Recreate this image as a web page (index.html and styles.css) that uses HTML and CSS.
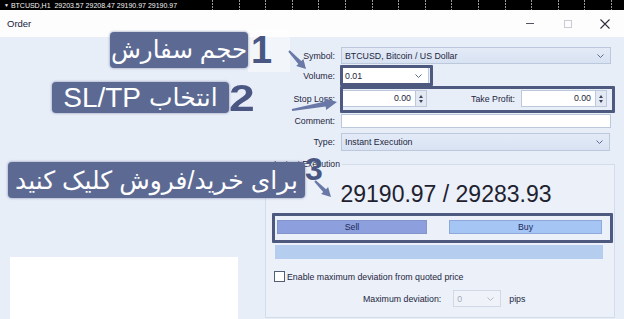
FILE: index.html
```html
<!DOCTYPE html>
<html>
<head>
<meta charset="utf-8">
<link rel="stylesheet" href="styles.css">
</head>
<body>
<div class="screen">
  <div class="chartbar">
    <span class="chart-title"><span class="tri">&#9660;</span> BTCUSD,H1&nbsp; 29203.57 29208.47 29190.97 29190.97</span>
    <div class="grid-dots"></div>
  </div>
  <div class="titlebar">
    <span class="title">Order</span>
    <div class="winctl">
      <span class="ctl"><span class="min"></span></span>
      <span class="ctl"><span class="max"></span></span>
      <span class="ctl"><svg class="close" width="10" height="10" viewBox="0 0 10 10"><path d="M0.5 0.5L9.5 9.5M9.5 0.5L0.5 9.5" stroke="#2a2f3a" stroke-width="1.1" fill="none"/></svg></span>
    </div>
  </div>
  <div class="main">
    <div class="left">
      <div class="preview"></div>
    </div>
    <div class="right">
      <div class="row row-symbol">
        <span class="lbl">Symbol:</span>
        <div class="select wide"><span>BTCUSD, Bitcoin / US Dollar</span><svg class="chev" width="7" height="4" viewBox="0 0 7 4"><path d="M0.5 0.5L3.5 3.5L6.5 0.5" stroke="#5b6b8c" fill="none"/></svg></div>
      </div>
      <div class="row row-volume">
        <span class="lbl">Volume:</span>
        <div class="select white vol"><span>0.01</span><svg class="chev" width="7" height="4" viewBox="0 0 7 4"><path d="M0.5 0.5L3.5 3.5L6.5 0.5" stroke="#5b6b8c" fill="none"/></svg></div>
      </div>
      <div class="row row-sl">
        <span class="lbl">Stop Loss:</span>
        <div class="sltp">
          <div class="spin"><span class="val">0.00</span><span class="arrows"><span class="up"></span><span class="dn"></span></span></div>
          <span class="tp-lbl">Take Profit:</span>
          <div class="spin"><span class="val">0.00</span><span class="arrows"><span class="up"></span><span class="dn"></span></span></div>
        </div>
      </div>
      <div class="row row-comment">
        <span class="lbl">Comment:</span>
        <div class="input comment"></div>
      </div>
      <div class="row row-type">
        <span class="lbl">Type:</span>
        <div class="select wide type"><span>Instant Execution</span><svg class="chev" width="7" height="4" viewBox="0 0 7 4"><path d="M0.5 0.5L3.5 3.5L6.5 0.5" stroke="#5b6b8c" fill="none"/></svg></div>
      </div>
      <fieldset class="group">
        <legend>Instant Execution</legend>
        <div class="price">29190.97 / 29283.93</div>
        <div class="buttons">
          <div class="btn sell">Sell</div>
          <div class="btn buy">Buy</div>
        </div>
        <div class="bar"></div>
        <div class="check"><span class="box"></span><span>Enable maximum deviation from quoted price</span></div>
        <div class="dev">
          <span>Maximum deviation:</span>
          <div class="select disabled"><span>0</span><svg class="chev" width="7" height="4" viewBox="0 0 7 4"><path d="M0.5 0.5L3.5 3.5L6.5 0.5" stroke="#b4bccb" fill="none"/></svg></div>
          <span>pips</span>
        </div>
      </fieldset>
    </div>
  </div>

  <div class="patch"></div>
  <div class="num n1">1</div>
  <div class="num n2">2</div>
  <div class="num n3">3</div>
  <div class="callout c1">حجم سفارش</div>
  <div class="callout c2"><span class="ar">انتخاب</span> SL/TP</div>
  <div class="callout c3">برای خرید/فروش کلیک کنید</div>
  <div class="frame f-vol"></div>
  <div class="frame f-sltp"></div>
  <div class="frame f-btn"></div>
  <svg class="arrows-svg" width="624" height="319" viewBox="0 0 624 319">
    <polygon points="289.7,50.3 301.3,61.1 303.4,59.1 306,69 296.2,65.9 298.3,63.9 288.3,51.7" fill="#6978a6"/>
    <polygon points="291.8,109.0 324.8,101.6 324.1,98.2 337,102 326.2,110.0 325.6,106.6 292.2,111.0" fill="#6978a6"/>
    <polygon points="315.7,180.3 326.0,189.2 328.1,187.1 331,197 321.1,194.1 323.2,192.0 314.3,181.7" fill="#6978a6"/>
  </svg>
</div>
</body>
</html>
```

FILE: styles.css
```css
* { box-sizing: border-box; margin: 0; padding: 0; }
html, body { width: 624px; height: 319px; overflow: hidden; }
body {
  background: #e8eef8;
  font-family: "Liberation Sans", Arial, sans-serif;
  font-size: 8.8px;
  color: #1d2640;
}
.screen { position: relative; width: 624px; height: 319px; display: flex; flex-direction: column; }

/* chart bar */
.chartbar { height: 10px; background: #000; display: flex; align-items: center; flex: none; }
.chart-title { color: #f2f2f2; font-size: 7px; padding-left: 4px; white-space: nowrap; line-height: 10px; }
.tri { font-size: 5px; vertical-align: 1px; }
.grid-dots {
  margin-left: auto; width: 412px; height: 10px;
  background: repeating-linear-gradient(90deg, #9a9a9a 0 1px, transparent 1px 26.6px);
  -webkit-mask-image: repeating-linear-gradient(180deg, #000 0 2px, transparent 2px 3px);
  mask-image: repeating-linear-gradient(180deg, #000 0 2px, transparent 2px 3px);
}

/* title bar */
.titlebar { height: 27px; background: #fdfdfe; display: flex; align-items: center; padding-left: 7px; flex: none; }
.title { font-size: 9.5px; color: #1a2238; }
.winctl { margin-left: auto; display: flex; }
.ctl { width: 37.5px; height: 27px; display: flex; align-items: center; justify-content: center; }
.min { width: 8px; height: 1px; background: #50555f; }
.max { width: 8px; height: 8px; border: 1px solid #c9ccd3; }

/* main */
.main { flex: 1; display: flex; min-height: 0; }
.left { width: 263px; display: flex; flex-direction: column; justify-content: flex-end; }
.preview { margin-left: 10px; width: 228px; height: 62px; background: #fff; }
.right { width: 361px; display: flex; flex-direction: column; }

.row { display: flex; align-items: center; gap: 6px; flex: none; }
.lbl { width: 72px; text-align: right; white-space: nowrap; }
.row-symbol { height: 17px; margin-top: 10px; }
.row-volume { height: 17px; margin-top: 3px; }
.row-sl { height: 17px; margin-top: 6px; }
.row-comment { height: 14px; margin-top: 7px; }
.row-type { height: 18px; margin-top: 5px; }

.select {
  height: 100%; display: flex; align-items: center; justify-content: space-between;
  border: 1px solid #bcc8dc; background: linear-gradient(#e4ebf7, #d8e2f2);
  padding: 0 6px 0 3px; white-space: nowrap;
}
.select.wide { width: 270px; }
.select.type { width: 269px; }
.select.white { background: #fff; }
.select.vol { width: 88px; }
.input { height: 100%; background: #fff; border: 1px solid #bcc8dc; }
.input.comment { width: 270px; }

.sltp { width: 266px; height: 100%; display: flex; align-items: center; }
.spin { width: 86px; height: 100%; display: flex; background: #fff; border: 1px solid #bcc8dc; }
.spin .val { flex: 1; text-align: right; padding-right: 4px; line-height: 15px; }
.spin .arrows { width: 11px; display: flex; flex-direction: column; justify-content: center; align-items: center; gap: 2px; background: #e3e9f3; border-left: 1px solid #bcc8dc; }
.up { width: 0; height: 0; border-left: 2.5px solid transparent; border-right: 2.5px solid transparent; border-bottom: 3px solid #3b4560; }
.dn { width: 0; height: 0; border-left: 2.5px solid transparent; border-right: 2.5px solid transparent; border-top: 3px solid #3b4560; }
.tp-lbl { flex: 1; text-align: right; padding-right: 6px; white-space: nowrap; }

/* group */
.group {
  margin: 8px 0 1px 2px; width: 350px; flex: 1;
  border: 1px solid #d4dcea; background: #ebf0f9;
  padding: 0 11px; min-width: 0;
}
.group legend { font-size: 8.6px; padding: 0 2px; margin-left: -5px; color: #1d2640; }
.price { font-size: 23px; line-height: 26px; color: #1e2230; text-align: center; padding-left: 12px; margin-top: 12px; white-space: nowrap; }
.buttons { display: flex; gap: 22px; margin-top: 13px; height: 14px; }
.btn { height: 14px; display: flex; align-items: center; justify-content: center; color: #1c2a5a; border: 1px solid rgba(120,140,190,.5); }
.sell { width: 150px; background: #8d9fdc; }
.buy { width: 153px; background: #a5c5f5; }
.bar { margin: 11px 0 0 -2px; width: 328px; height: 14px; background: #b5cdef; }
.check { display: flex; align-items: center; gap: 2px; margin: 12px 0 0 -3px; height: 11px; white-space: nowrap; }
.box { width: 11px; height: 11px; border: 1px solid #555d72; background: #fff; }
.dev { display: flex; align-items: center; height: 17px; margin-top: 8px; padding-left: 86px; gap: 0; white-space: nowrap; }
.dev .select.disabled { width: 48px; margin-left: 12px; margin-right: 8px; background: #eff3f9; border-color: #d2d9e6; color: #a3abbb; }

/* overlays */
.patch { position: absolute; left: 248px; top: 30px; width: 42px; height: 42px; background: rgba(255,255,255,.45); }
.num { position: absolute; font-family: "Liberation Sans", Arial, sans-serif; font-weight: bold; color: #4a5783; line-height: 1; }
.n1 { left: 251px; top: 31px; font-size: 38px; }
.n2 { left: 229px; top: 80px; font-size: 37px; transform: scaleX(1.25); transform-origin: left top; }
.n3 { left: 305px; top: 153px; font-size: 32px; }
.callout {
  position: absolute; background: #5c6a93; color: #fff; border-radius: 4px;
  font-family: "Liberation Sans", "DejaVu Sans", sans-serif;
  display: flex; align-items: center; justify-content: center;
  direction: rtl; white-space: nowrap; line-height: 1;
  box-shadow: 0 0 2px 1px rgba(92,106,147,.35);
}
.c1 { left: 110px; top: 32px; width: 138px; height: 36px; font-size: 24.5px; }
.c2 { left: 52px; top: 82px; width: 177px; height: 31px; font-size: 28px; gap: 8px; }
.c2 .ar { font-size: 25px; }
.c3 { left: 8px; top: 162px; width: 297px; height: 36px; font-size: 25px; }
.frame { position: absolute; border: 3px solid #4e597f; border-radius: 1px; }
.f-vol { left: 340px; top: 65px; width: 93px; height: 21px; }
.f-sltp { left: 340px; top: 86px; width: 275px; height: 27px; }
.f-btn { left: 272px; top: 213px; width: 341px; height: 30px; }
.arrows-svg { position: absolute; left: 0; top: 0; pointer-events: none; }
```
